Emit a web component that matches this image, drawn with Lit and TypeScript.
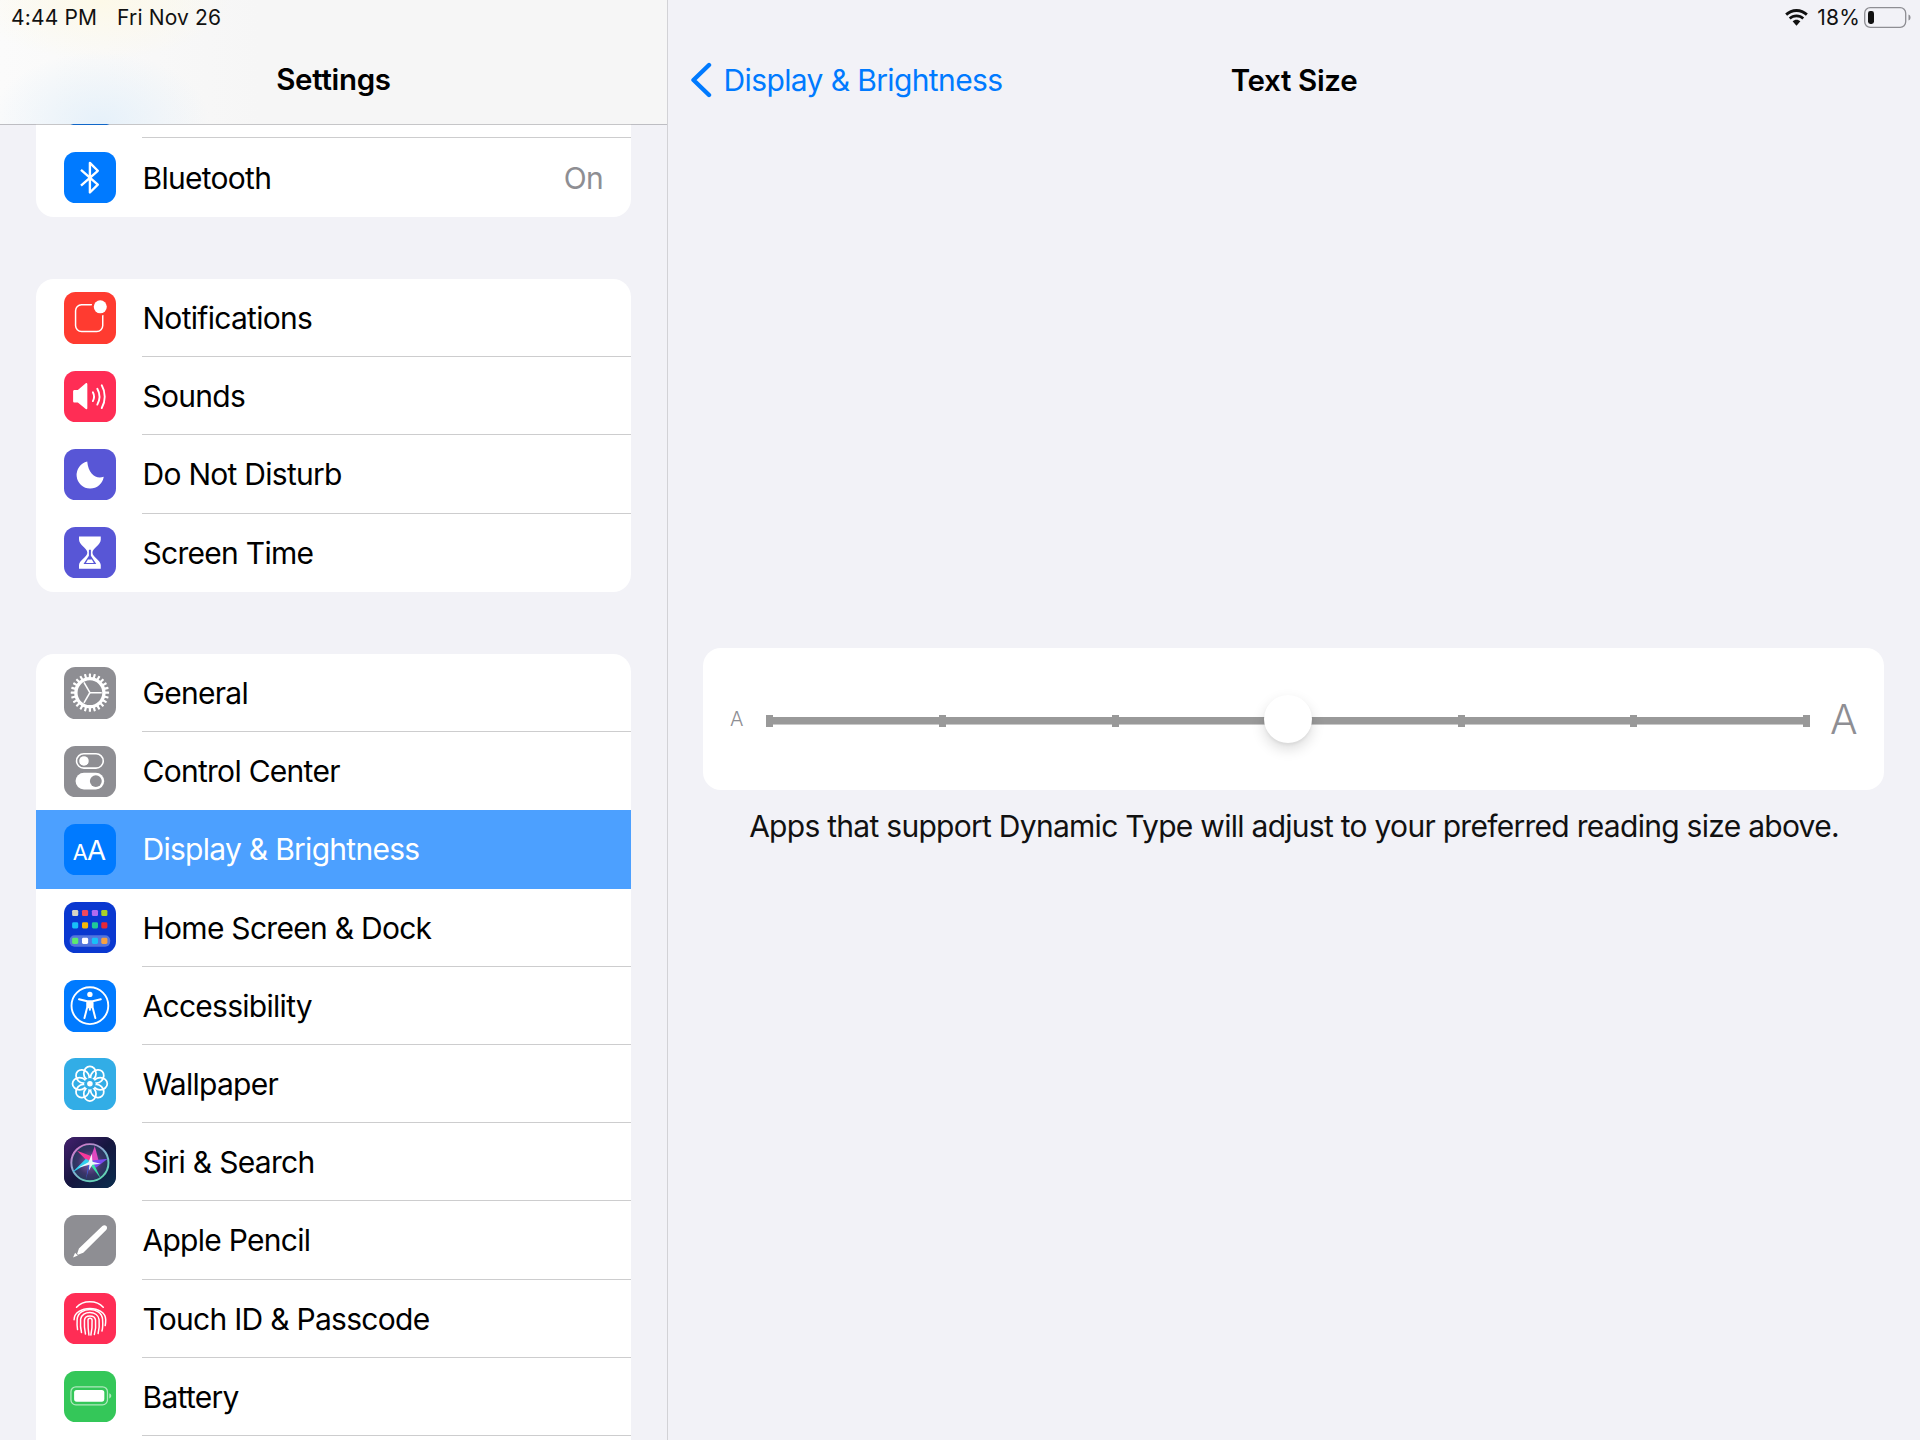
import { LitElement, html, svg, css } from 'lit';
import { customElement } from 'lit/decorators.js';
import { classMap } from 'lit/directives/class-map.js';

const range = (n: number) => Array.from({ length: n }, (_, i) => i);

// one icon per settings row, all drawn on a 52 unit tile
const ICONS: Record<string, any> = {
  wifi: svg``,
  bluetooth: svg`<path d="M17 18 34 33 26 41V11l8 8-17 15" fill="none" stroke="#fff" stroke-width="2.4" stroke-linejoin="round"/>`,
  notifications: svg`
    <rect x="11.5" y="13" width="27.5" height="27" rx="6" fill="none" stroke="#fff" stroke-width="1.5"/>
    <circle cx="36.5" cy="15" r="9" fill="#ff3b30"/>
    <circle cx="36.5" cy="15" r="6.6" fill="#fff"/>`,
  sounds: svg`
    <path d="M9 20.5c0-.8.6-1.4 1.4-1.4h3.4l8-6.6c.8-.6 1.6-.2 1.6.8v24.4c0 1-.8 1.4-1.6.8l-8-6.6h-3.4c-.8 0-1.4-.6-1.4-1.4z" fill="#fff"/>
    <g fill="none" stroke="#fff" stroke-width="1.9" stroke-linecap="round">
      <path d="M29 21.5c1.6 3 1.6 6 0 9"/>
      <path d="M33.5 18c2.8 5 2.8 11 0 16"/>
      <path d="M38 14.5c4 7 4 16 0 23"/>
    </g>`,
  moon: svg`<path d="M23.3 12.7A13.8 13.8 0 1 0 40 28C33 31 24.5 26 23.3 12.7z" fill="#fff"/>`,
  screentime: svg`
    <path d="M15 9.5h22v3.5c0 5-8.4 9-8.4 13 0 4 8.4 8 8.4 12.5v3.8H15v-3.8c0-4.5 8.4-8.5 8.4-12.5 0-4-8.4-8-8.4-13z" fill="#fff"/>
    <path d="M25 23h2v6l5.5 8.5H19.5L25 29z" fill="#5856d6"/>
    <path d="M24 33h4l2 3.5h-8z" fill="#fff"/>`,
  general: svg`
    ${range(24).map(i => svg`<rect x="24.9" y="6.6" width="2.2" height="5" rx=".4" fill="#fff" transform="rotate(${i * 15} 26 26)"/>`)}
    <circle cx="26" cy="26" r="14.2" fill="none" stroke="#fff" stroke-width="3.4"/>
    <g stroke="#fff" stroke-width="1.6">
      <path d="M26 26H38"/>
      <path d="M26 26 20 36.4"/>
      <path d="M26 26 20 15.6"/>
    </g>`,
  control: svg`
    <rect x="12.5" y="7.8" width="27" height="14.6" rx="7.3" fill="none" stroke="#fff" stroke-width="1.6"/>
    <circle cx="20" cy="15.1" r="4.8" fill="#fff"/>
    <rect x="11.5" y="27" width="29" height="17" rx="8.5" fill="#fff"/>
    <circle cx="32" cy="35.5" r="6" fill="#8e8e93"/>`,
  display: svg`
    <text x="8.6" y="36" font-size="22" fill="#fff">A</text>
    <text x="23" y="36" font-size="28" fill="#fff">A</text>`,
  home: svg`
    <rect x="5.5" y="33.6" width="41" height="11.6" rx="5" fill="#fff" fill-opacity=".3"/>
    ${[
      [8, 8, '#d8d4c4'], [18, 8, '#f0485c'], [28, 8, '#b06af0'], [37.5, 8, '#a8d028'],
      [8, 20.6, '#18c0f8'], [18, 20.6, '#f8b808'], [28, 20.6, '#20c898'], [37.5, 20.6, '#e82838'],
      [8, 36.2, '#5ce870'], [18, 36.2, '#ffffff'], [28, 36.2, '#18c0f8'], [37.5, 36.2, '#f8a040']
    ].map(([x, y, c]) => svg`<rect x="${x}" y="${y}" width="6.2" height="6.2" rx="1.4" fill="${c}"/>`)}`,
  accessibility: svg`
    <circle cx="26" cy="26" r="18.6" fill="none" stroke="#fff" stroke-width="1.9"/>
    <circle cx="26" cy="14.6" r="2.7" fill="#fff"/>
    <path d="M15 19.5l8.3 2v6L20.5 38.5M37 19.5l-8.3 2v6L31.5 38.5M23.3 21.5h5.4M23.3 27.5h5.4M26 27.5V30" fill="none" stroke="#fff" stroke-width="2" stroke-linecap="round" stroke-linejoin="round"/>
    <rect x="23.3" y="21.5" width="5.4" height="6.5" fill="#fff"/>`,
  wallpaper: svg`
    <g fill="none" stroke="#fff" stroke-width="1.8">
      ${range(8).map(i => svg`<ellipse cx="26" cy="15.6" rx="6.2" ry="7.2" transform="rotate(${i * 45} 26 26)"/>`)}
    </g>
    <circle cx="26" cy="26" r="5.8" fill="#32ade6"/>
    <circle cx="26" cy="26" r="2.8" fill="#fff"/>`,
  siri: svg`
    <defs>
      <linearGradient id="siri-bg" x1="0" y1="0" x2="1" y2="1">
        <stop offset="0" stop-color="#45206f"/><stop offset=".5" stop-color="#15163f"/><stop offset="1" stop-color="#0a2e4e"/>
      </linearGradient>
      <radialGradient id="siri-disc">
        <stop offset="0" stop-color="#8a5aa8"/><stop offset=".65" stop-color="#3a3468"/><stop offset="1" stop-color="#23365c"/>
      </radialGradient>
      <linearGradient id="siri-ring" x1=".1" y1="0" x2=".8" y2="1">
        <stop offset="0" stop-color="#e070c8"/><stop offset=".5" stop-color="#80b0d0"/><stop offset="1" stop-color="#60d8b0"/>
      </linearGradient>
      <filter id="siri-soft" x="-20%" y="-20%" width="140%" height="140%"><feGaussianBlur stdDeviation=".7"/></filter>
    </defs>
    <rect width="52" height="52" fill="url(#siri-bg)"/>
    <circle cx="26" cy="26" r="18.8" fill="url(#siri-disc)" stroke="url(#siri-ring)" stroke-width="2"/>
    <g filter="url(#siri-soft)">
      <path d="M26 27 13 14 29 20z" fill="#f8389a"/>
      <path d="M25 26 31 9 35 25z" fill="#e048c0"/>
      <path d="M26 24 44 22 32 31z" fill="#7a48f0"/>
      <path d="M27 25 8 36 22 22z" fill="#30d0f0"/>
      <path d="M24 25 37 42 28 23z" fill="#38e0a8"/>
      <path d="M27 24 22 43 25 25z" fill="#4060e0"/>
      <path d="M28 17 28.5 25 37 27 28.5 28 25 34 25.5 28 14 31 24.5 25.500z" fill="#fff" fill-opacity=".9"/>
    </g>`,
  pencil: svg`
    <path d="M38.6 11.2c1.2-1.2 3-1.2 4 0 1 1 1 2.8-.1 3.9L19.3 38.3l-5.4 1.8-.8-.8 1.8-5.4z" fill="#fff"/>
    <path d="M9 43l2-4.8 2.8 2.8z" fill="#fff"/>`,
  touchid: svg`
    <g fill="none" stroke="#fff" stroke-width="1.5" stroke-linecap="round">
      <path d="M12.5 14.5C19 7 33 7 39.5 14.5"/>
      <path d="M10 27C10 12 42 12 42 27c0 2 0 4-.5 6"/>
      <path d="M13.5 37c-.6-3-.6-7-.4-10.5C14.5 13.5 37.5 13.5 38.8 26.5c.3 4 .3 9-.6 12"/>
      <path d="M17.5 40c-1-4-1.2-9-.9-13.5C18 17.5 34 17.5 35.3 27c.4 4.5.2 9.5-1 14"/>
      <path d="M21.5 41.5c-1-4.5-1.3-9.5-1-14C21 22 31 22 31.7 27.5c.4 4.5.2 9.5-1.2 14.5"/>
      <path d="M25 42.5c-.8-5-1-10-.9-15 0-2.6 4-2.6 4.1 0 .2 5 0 10-1.2 15"/>
    </g>`,
  battery: svg`
    <rect x="6.8" y="16" width="37" height="18.2" rx="5" fill="none" stroke="#fff" stroke-opacity=".6" stroke-width="1.3"/>
    <rect x="10" y="19.2" width="30.6" height="11.8" rx="2.6" fill="#fff"/>
    <path d="M45.6 22.5c1.3.4 2 1.3 2 2.6s-.7 2.2-2 2.6z" fill="#fff" fill-opacity=".6"/>`
};

const GROUPS = [
  [
    { key: 'wifi', color: '#007aff', label: '' },
    { key: 'bluetooth', color: '#007aff', label: 'Bluetooth', value: 'On' }
  ],
  [
    { key: 'notifications', color: '#ff3b30', label: 'Notifications' },
    { key: 'sounds', color: '#ff2d55', label: 'Sounds' },
    { key: 'moon', color: '#5856d6', label: 'Do Not Disturb' },
    { key: 'screentime', color: '#5856d6', label: 'Screen Time' }
  ],
  [
    { key: 'general', color: '#8e8e93', label: 'General' },
    { key: 'control', color: '#8e8e93', label: 'Control Center' },
    { key: 'display', color: '#007aff', label: 'Display & Brightness' },
    { key: 'home', color: '#0a38d0', label: 'Home Screen & Dock' },
    { key: 'accessibility', color: '#007aff', label: 'Accessibility' },
    { key: 'wallpaper', color: '#32ade6', label: 'Wallpaper' },
    { key: 'siri', color: '#14163f', label: 'Siri & Search' },
    { key: 'pencil', color: '#8e8e93', label: 'Apple Pencil' },
    { key: 'touchid', color: '#ff2d55', label: 'Touch ID & Passcode' },
    { key: 'battery', color: '#34c759', label: 'Battery' }
  ]
];

const SELECTED = 'display';
// these rows have no line underneath
const NO_LINE = ['control', 'display'];

@customElement('app-root')
export class AppRoot extends LitElement {
  static styles = css`
    :host {
      display: flex;
      width: 1920px;
      height: 1440px;
      overflow: hidden;
      background: #f2f2f7;
      color: #000;
      font-family: Inter, "Liberation Sans", sans-serif;
    }

    /* left column */
    .sidebar {
      position: relative;
      box-sizing: border-box;
      width: 668px;
      height: 1440px;
      flex: none;
      overflow: hidden;
      border-right: 1px solid #d2d2d6;
    }

    .sidebar-head {
      position: absolute;
      top: 0;
      left: 0;
      right: 0;
      z-index: 2;
      box-sizing: border-box;
      height: 125px;
      border-bottom: 1px solid rgba(60, 60, 67, 0.29);
      background:
        radial-gradient(ellipse 110px 70px at 100px 122px, #e6f1fa 0%, rgba(230, 241, 250, 0) 100%),
        radial-gradient(ellipse 130px 60px at 100px 0, #fdf9e8 0%, rgba(253, 249, 232, 0) 100%),
        linear-gradient(90deg, #fbfbfb 0, #f6f6f6 260px);
      background-clip: padding-box;
    }

    .clock {
      display: flex;
      gap: 20px;
      padding: 5px 0 0 11px;
      font-size: 21px;
      line-height: 25px;
      letter-spacing: 0.15px;
      color: #111;
    }

    .sidebar-title {
      margin-top: 29px;
      text-align: center;
      font-size: 29.5px;
      line-height: 40px;
      font-weight: 600;
      letter-spacing: -0.3px;
    }

    .list {
      display: flex;
      flex-direction: column;
      gap: 62.3px;
      padding: 60.3px 36px 0;
    }

    .group {
      background: #fff;
      border-radius: 18px;
      overflow: hidden;
    }

    .group.last {
      padding-bottom: 30px;
      border-radius: 18px 18px 0 0;
    }

    .row {
      display: flex;
      align-items: center;
      height: 78.2px;
      padding-left: 28px;
      font-size: 30px;
      letter-spacing: -0.72px;
    }

    .row.selected {
      background: #4ca0ff;
      color: #fff;
    }

    .tile {
      flex: none;
      width: 51.8px;
      height: 51.4px;
      margin-right: 26.2px;
      border-radius: 11.5px;
      overflow: hidden;
    }

    .tile svg {
      display: block;
      width: 100%;
      height: 100%;
      font-family: Inter, "Liberation Sans", sans-serif;
    }

    .row-body {
      flex: 1;
      display: flex;
      align-items: center;
      justify-content: space-between;
      height: 100%;
      box-sizing: border-box;
      padding: 1px 28px 0 0.5px;
      border-bottom: 1px solid rgba(60, 60, 67, 0.26);
    }

    .row-body.plain {
      border-bottom-color: transparent;
    }

    .row-value {
      color: #8e8e93;
    }

    /* right column */
    .detail {
      flex: 1;
      min-width: 0;
    }

    .status {
      display: flex;
      align-items: center;
      justify-content: flex-end;
      height: 35px;
      padding-right: 9px;
      font-size: 21px;
      letter-spacing: 0.2px;
      color: #111;
    }

    .status .wifi {
      width: 25px;
      height: 18px;
      margin-right: 8px;
    }

    .status .batt {
      width: 47px;
      height: 21px;
      margin-left: 4px;
    }

    .nav {
      display: grid;
      grid-template-columns: 1fr auto 1fr;
      align-items: center;
      height: 90px;
      margin-bottom: 522.7px;
    }

    .back {
      display: flex;
      align-items: center;
      padding-left: 22px;
      color: #007aff;
      font-size: 30px;
      letter-spacing: -0.62px;
    }

    .back svg {
      width: 22px;
      height: 36px;
      margin-right: 11.5px;
    }

    .nav-title {
      font-size: 29.5px;
      font-weight: 600;
      letter-spacing: -0.35px;
    }

    .card {
      display: flex;
      align-items: center;
      box-sizing: border-box;
      height: 142.3px;
      margin: 0 36px 0 35px;
      padding: 0 26.5px 0 27px;
      background: #fff;
      border-radius: 18px;
    }

    .small-a,
    .big-a {
      color: #8e8e93;
      font-weight: 300;
    }

    .small-a {
      font-size: 20px;
      margin-right: 23px;
    }

    .big-a {
      font-size: 41px;
      margin-left: 19.6px;
    }

    .slider {
      position: relative;
      flex: 1;
      display: flex;
      justify-content: space-between;
      align-items: center;
      height: 12px;
      margin-top: 3.6px;
    }

    .rail {
      position: absolute;
      left: 0;
      right: 0;
      top: 2.5px;
      height: 7px;
      background: #999;
      box-shadow: 0 1px 0 #c8c8c8;
    }

    .tick {
      position: relative;
      width: 7px;
      height: 12px;
      background: #999;
    }

    .thumb {
      position: absolute;
      left: 50%;
      top: -19.8px;
      width: 48px;
      height: 48px;
      margin-left: -24px;
      border-radius: 50%;
      background: #fff;
      box-shadow: 0 6px 14px rgba(0, 0, 0, 0.14), 0 2px 3px rgba(0, 0, 0, 0.05);
    }

    .caption {
      margin-top: 17.5px;
      text-align: center;
      font-size: 30px;
      line-height: 38px;
      letter-spacing: -0.72px;
      color: #111;
    }
  `;

  renderRow(item: any, last: boolean) {
    const plain = last || NO_LINE.includes(item.key);
    return html`
      <div class=${classMap({ row: true, selected: item.key === SELECTED })}>
        <div class="tile" style="background:${item.color}">
          <svg viewBox="0 0 52 52">${ICONS[item.key]}</svg>
        </div>
        <div class=${classMap({ 'row-body': true, plain })}>
          <span>${item.label}</span>
          ${item.value ? html`<span class="row-value">${item.value}</span>` : ''}
        </div>
      </div>
    `;
  }

  render() {
    return html`
      <div class="sidebar">
        <div class="sidebar-head">
          <div class="clock"><span>4:44 PM</span><span>Fri Nov 26</span></div>
          <div class="sidebar-title">Settings</div>
        </div>
        <div class="list">
          ${GROUPS.map((group, g) => html`
            <div class=${classMap({ group: true, last: g === GROUPS.length - 1 })}>
              ${group.map((item, i) => this.renderRow(item, g < GROUPS.length - 1 && i === group.length - 1))}
            </div>
          `)}
        </div>
      </div>

      <div class="detail">
        <div class="status">
          <svg class="wifi" viewBox="0 0 25 18">
            <path d="M12.5 3c3.6 0 6.9 1.4 9.4 3.7l1.9-2.1C20.8 1.7 16.9 0 12.5 0S4.2 1.700 1.200 4.600l1.900 2.100C5.600 4.400 8.900 3 12.500 3z" fill="#111"/>
            <path d="M12.5 8.300c2.200 0 4.200.8 5.800 2.200l1.900-2.100c-2.100-1.800-4.800-3-7.700-3s-5.600 1.200-7.700 3l1.900 2.100c1.600-1.400 3.600-2.200 5.800-2.200z" fill="#111"/>
            <path d="M12.5 10.800c-1.500 0-2.800.6-3.900 1.500l3.900 4.400 3.900-4.400c-1.100-.9-2.400-1.500-3.900-1.500z" fill="#111"/>
          </svg>
          <span>18%</span>
          <svg class="batt" viewBox="0 0 47 21">
            <rect x=".7" y=".7" width="41" height="19.6" rx="5.5" fill="none" stroke="#8e8e93" stroke-width="1.3"/>
            <rect x="4" y="4" width="6" height="13" rx="2.4" fill="#111"/>
            <path d="M44.5 7.500c1.300.4 2 1.500 2 3s-.7 2.600-2 3z" fill="#8e8e93"/>
          </svg>
        </div>
        <div class="nav">
          <div class="back">
            <svg viewBox="0 0 22 36">
              <path d="M19 3 3.5 18 19 33" fill="none" stroke="#007aff" stroke-width="4.4" stroke-linecap="round" stroke-linejoin="round"/>
            </svg>
            <span>Display &amp; Brightness</span>
          </div>
          <div class="nav-title">Text Size</div>
          <div></div>
        </div>

        <div class="card">
          <span class="small-a">A</span>
          <div class="slider">
            <div class="rail"></div>
            ${range(7).map(() => html`<div class="tick"></div>`)}
            <div class="thumb"></div>
          </div>
          <span class="big-a">A</span>
        </div>
        <div class="caption">Apps that support Dynamic Type will adjust to your preferred reading size above.</div>
      </div>
    `;
  }
}
